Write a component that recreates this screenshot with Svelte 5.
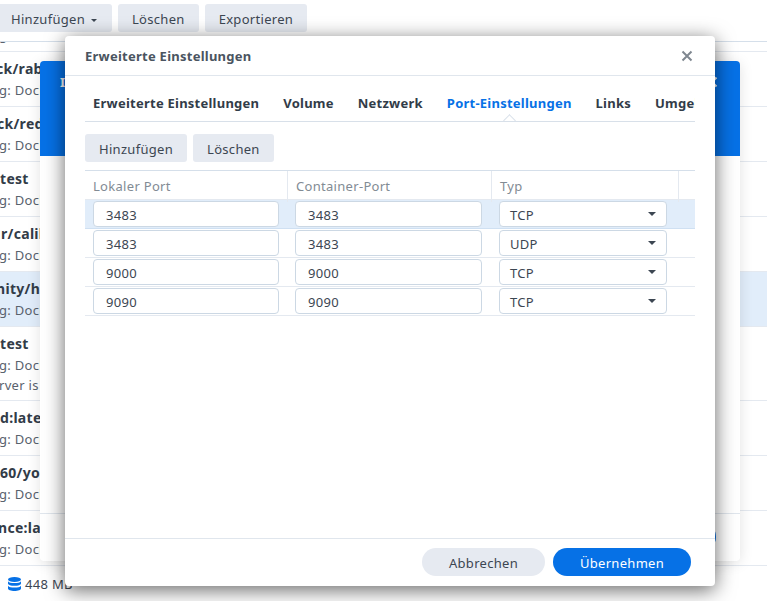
<script>
	const rows = [
		{ title: 'ck/rabbitmq:latest', sub: 'g: Docker', off: -4 },
		{ title: 'ck/redis:latest', sub: 'g: Docker', off: -3 },
		{ title: 'test', sub: 'g: Docker', off: 0 },
		{ title: 'r/calibre:latest', sub: 'g: Docker', off: 1 },
		{ title: 'nity/homeassistant', sub: 'g: Docker', off: -4, active: true },
		{ title: 'test', sub: 'g: Docker', extra: 'rver is running', off: 0 },
		{ title: 'd:latest', sub: 'g: Docker', off: 0 },
		{ title: '60/youtube', sub: 'g: Docker', off: 0 },
		{ title: 'nce:latest', sub: 'g: Docker', off: -2 }
	];

	const tabs = ['Erweiterte Einstellungen', 'Volume', 'Netzwerk', 'Port-Einstellungen', 'Links', 'Umgebung'];

	const ports = [
		{ local: '3483', container: '3483', type: 'TCP', selected: true },
		{ local: '3483', container: '3483', type: 'UDP' },
		{ local: '9000', container: '9000', type: 'TCP' },
		{ local: '9090', container: '9090', type: 'TCP' }
	];
</script>

<div class="page">
	<div class="toolbar">
		<button class="btn first">Hinzufügen <span class="caret small"></span></button>
		<button class="btn">Löschen</button>
		<button class="btn">Exportieren</button>
	</div>

	<div class="list">
		<div class="stub"><div class="peek">g</div></div>
		{#each rows as row}
			<div class="row" class:active={row.active}>
				<div class="title" style="margin-left: {row.off}px">{row.title}</div>
				<div class="sub">{row.sub}</div>
				{#if row.extra}
					<div class="sub">{row.extra}</div>
				{/if}
			</div>
		{/each}
	</div>

	<div class="status">
		<svg width="13" height="14" viewBox="0 0 13 14">
			<ellipse cx="6.500" cy="2.500" rx="6.500" ry="2.500" fill="#0671e6" />
			<path d="M0 4.200c1 1.400 3.300 1.900 6.500 1.900S12 5.600 13 4.200v2.300c0 1.400-2.900 2.300-6.500 2.300S0 7.900 0 6.500z" fill="#0671e6" />
			<path d="M0 8.700c1 1.400 3.300 1.900 6.500 1.900s5.500-.5 6.500-1.900v2.800c0 1.400-2.900 2.500-6.500 2.500S0 12.900 0 11.500z" fill="#0671e6" />
		</svg>
		<span>448 MB</span>
	</div>
	<div class="below">laufend</div>

	<div class="back-modal">
		<div class="back-head">
			<span>Image</span>
			<svg width="12" height="12" viewBox="0 0 12 12">
				<path d="M1.500 1.500l9 9M10.500 1.500l-9 9" stroke="#fff" stroke-width="2" fill="none" />
			</svg>
		</div>
		<div class="back-body"></div>
		<footer class="modal-foot">
			<button class="pill primary">Weiter</button>
		</footer>
	</div>

	<div class="modal">
		<header class="modal-head">
			<span>Erweiterte Einstellungen</span>
			<svg width="12" height="12" viewBox="0 0 12 12">
				<path d="M1.500 1.500l9 9M10.500 1.500l-9 9" stroke="#7f8790" stroke-width="2" fill="none" />
			</svg>
		</header>

		<div class="modal-body">
			<nav class="tabs">
				{#each tabs as tab}
					<span class="tab" class:current={tab === 'Port-Einstellungen'}>{tab}</span>
				{/each}
			</nav>

			<div class="actions">
				<button class="btn">Hinzufügen</button>
				<button class="btn">Löschen</button>
			</div>

			<div class="table">
				<div class="thead">
					<div>Lokaler Port</div>
					<div>Container-Port</div>
					<div>Typ</div>
					<div></div>
				</div>
				{#each ports as port}
					<div class="tr" class:selected={port.selected}>
						<div class="field">{port.local}</div>
						<div class="field">{port.container}</div>
						<div class="field select">
							{port.type}
							<span class="caret"></span>
						</div>
					</div>
				{/each}
			</div>
		</div>

		<footer class="modal-foot">
			<button class="pill">Abbrechen</button>
			<button class="pill primary">Übernehmen</button>
		</footer>
	</div>
</div>

<style>
	:global(body) {
		margin: 0;
		background: #fff;
	}

	* {
		box-sizing: border-box;
	}

	.page {
		position: relative;
		width: 767px;
		height: 601px;
		overflow: hidden;
		font-family: 'Noto Sans', sans-serif;
		font-size: 13px;
		letter-spacing: 0.3px;
		color: #3c4652;
	}

	button {
		font: inherit;
		letter-spacing: inherit;
		color: inherit;
		border: 0;
		cursor: pointer;
	}

	.btn {
		height: 28px;
		padding: 2px 14px 0;
		border-radius: 3px;
		background: #e6eaf1;
		white-space: nowrap;
	}

	.toolbar {
		display: flex;
		gap: 6px;
		height: 42px;
		padding-top: 4px;
		border-bottom: 1px solid #d5dfea;
	}

	.first {
		width: 112px;
		padding: 2px 0 0 11px;
		text-align: left;
		border-radius: 0 3px 3px 0;
	}

	.caret {
		display: inline-block;
		border-top: 4px solid #3c4652;
		border-left: 4px solid transparent;
		border-right: 4px solid transparent;
	}

	.small {
		border-top-width: 3px;
		border-left-width: 3px;
		border-right-width: 3px;
		margin-left: 2px;
		vertical-align: 2px;
	}

	.stub {
		height: 10px;
		border-bottom: 1px solid #e4e9f0;
		overflow: hidden;
	}

	/* only the tail of a scrolled-away row shows */
	.peek {
		margin-top: -17px;
		margin-left: -1px;
		line-height: 20px;
		color: #59626d;
	}

	.row {
		padding-top: 6px;
		padding-bottom: 6px;
		min-height: 55px;
		border-bottom: 1px solid #e4e9f0;
		white-space: nowrap;
		overflow: hidden;
	}

	.active {
		background: #e1edfa;
	}

	.title {
		font-weight: 700;
		font-size: 14px;
		line-height: 21px;
		color: #323c48;
	}

	.sub {
		line-height: 20px;
		margin-left: -1px;
		padding-top: 1px;
		margin-bottom: -1px;
		color: #59626d;
	}

	.status {
		display: flex;
		align-items: center;
		gap: 4px;
		padding: 9px 0 0 8px;
	}

	.below {
		height: 12px;
		margin-top: 6px;
		padding-left: 46px;
		color: #59626d;
	}

	.back-modal {
		position: absolute;
		left: 40px;
		top: 61px;
		width: 700px;
		height: 500px;
		display: flex;
		flex-direction: column;
		background: #fff;
		border-radius: 4px;
		box-shadow: 0 2px 14px rgba(0, 0, 0, 0.12);
	}

	.back-head {
		height: 95px;
		display: flex;
		justify-content: space-between;
		padding: 12px 22px 0 20px;
		background: #0671e6;
		border-radius: 4px 4px 0 0;
		color: #fff;
		font-weight: 700;
	}

	.back-head svg {
		margin-top: 3px;
	}

	.back-body {
		flex: 1;
	}

	.modal {
		position: absolute;
		left: 65px;
		top: 36px;
		width: 650px;
		height: 550px;
		display: flex;
		flex-direction: column;
		background: #fff;
		border-radius: 4px;
		box-shadow: 0 4px 20px rgba(0, 0, 0, 0.6);
	}

	.modal-head {
		height: 40px;
		flex: none;
		display: flex;
		align-items: center;
		justify-content: space-between;
		padding: 1px 22px 0 20px;
		border-bottom: 1px solid #e0e6ed;
		font-weight: 700;
		letter-spacing: 0.25px;
		color: #4a5460;
	}

	.modal-body {
		flex: 1;
		padding: 0 20px;
	}

	.tabs {
		display: flex;
		gap: 24px;
		height: 46px;
		padding: 18px 8px 0;
		border-bottom: 1px solid #d8e0e9;
		overflow: hidden;
		white-space: nowrap;
		font-weight: 700;
		letter-spacing: 0.24px;
		line-height: 18px;
		color: #323c48;
	}

	.current {
		position: relative;
		height: 27px;
		color: #0671e6;
	}

	/* little notch on the line under the current tab */
	.current::after {
		content: '';
		position: absolute;
		left: 50%;
		bottom: -4px;
		width: 8px;
		height: 8px;
		margin-left: -4px;
		background: #fff;
		border-top: 1px solid #d8e0e9;
		border-left: 1px solid #d8e0e9;
		transform: rotate(45deg);
	}

	.actions {
		display: flex;
		gap: 6px;
		margin-top: 12px;
		margin-bottom: 8px;
	}

	.table {
		border-top: 1px solid #d5dfea;
	}

	.thead {
		display: grid;
		grid-template-columns: 203px 204px 187px 16px;
		height: 29px;
		border-bottom: 1px solid #e4e9f0;
		color: #828b94;
		line-height: 31px;
	}

	.thead div {
		padding-left: 8px;
		border-right: 1px solid #e4e9f0;
	}

	.thead div:last-child {
		border-right: 0;
	}

	.tr {
		display: grid;
		grid-template-columns: 186px 187px 169px;
		column-gap: 16px;
		align-items: center;
		height: 29px;
		padding-left: 8px;
		border-bottom: 1px solid #e4e9f0;
	}

	.selected {
		background: #e1edfa;
		border-bottom-color: #cfe0f2;
	}

	.field {
		height: 26px;
		padding-left: 12px;
		line-height: 27px;
		background: #fff;
		border: 1px solid #ccd8e4;
		border-radius: 4px;
	}

	.select {
		position: relative;
		margin-left: 1px;
		padding-left: 10px;
	}

	.select .caret {
		position: absolute;
		right: 10px;
		top: 10px;
	}

	.modal-foot {
		height: 48px;
		flex: none;
		display: flex;
		justify-content: flex-end;
		gap: 8px;
		padding: 9px 24px 0 0;
		border-top: 1px solid #e0e6ed;
	}

	.pill {
		height: 28px;
		width: 123px;
		padding-top: 2px;
		border-radius: 14px;
		background: #e6eaf1;
	}

	.primary {
		width: 138px;
		background: #0671e6;
		color: #fff;
	}
</style>
